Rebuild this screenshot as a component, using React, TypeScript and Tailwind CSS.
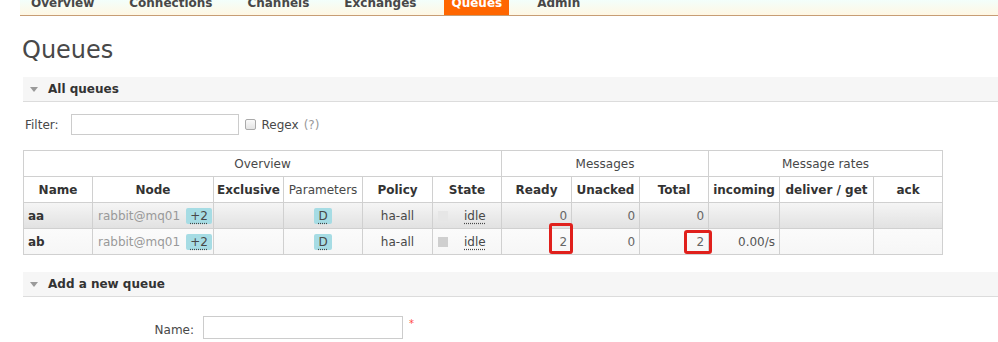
const NAV = ["Overview", "Connections", "Channels", "Exchanges", "Queues", "Admin"];

const COLS = [69, 121, 70, 79, 70, 69, 70, 68, 69, 71, 94, 69];

const HEADERS = [
  { label: "Name", bold: true },
  { label: "Node", bold: true },
  { label: "Exclusive", bold: true },
  { label: "Parameters", bold: false },
  { label: "Policy", bold: true },
  { label: "State", bold: true },
  { label: "Ready", bold: true },
  { label: "Unacked", bold: true },
  { label: "Total", bold: true },
  { label: "incoming", bold: true },
  { label: "deliver / get", bold: true },
  { label: "ack", bold: true },
];

const ROWS = [
  { name: "aa", ready: "0", unacked: "0", total: "0", incoming: "", alt: true },
  { name: "ab", ready: "2", unacked: "0", total: "2", incoming: "0.00/s", alt: false },
];

function SectionHeader({ title }: { title: string }) {
  return (
    <div className="flex h-[25px] items-center border-b border-[#dcdcdc] bg-[#f6f6f6] pl-[7px]">
      <span className="h-0 w-0 border-x-[4px] border-t-[5px] border-x-transparent border-t-[#9a9a9a]" />
      <h2 className="ml-[10px] text-[12px] font-bold text-[#333]">{title}</h2>
    </div>
  );
}

function Badge({ children }: { children: string }) {
  return (
    <span className="inline-block rounded-[2px] bg-[#a6dce4] px-[4px] leading-[16px] text-[#484848] underline decoration-dotted underline-offset-[3px]">
      {children}
    </span>
  );
}

export default function App() {
  return (
    <div className="h-[342px] w-[998px] overflow-hidden bg-white font-['DejaVu_Sans',sans-serif] text-[12px] text-[#484848]">
      <nav className="ml-[20px] h-[16px] overflow-hidden border-b border-[#c79d74] bg-linear-to-b from-[#f3fffb] to-[#fff7e4]">
        <ul className="flex gap-[21px] pl-[4px]">
          {NAV.map((item) => (
            <li
              key={item}
              className={
                item === "Queues"
                  ? "h-[15px] bg-[#ff6600] px-[7px] font-bold leading-[14px] text-white"
                  : "h-[15px] px-[7px] font-bold leading-[14px] text-[#484848]"
              }
            >
              <span className="-mt-[4px] block">{item}</span>
            </li>
          ))}
        </ul>
      </nav>

      <h1 className="ml-[22px] mt-[20px] text-[24px] font-normal leading-[28px] text-[#484848]">Queues</h1>

      <div className="ml-[23px] mt-[13px]">
        <SectionHeader title="All queues" />

        <div className="mt-[12px] flex h-[21px] items-center pl-[2px]">
          <span>Filter:</span>
          <input type="text" className="ml-[12px] h-[21px] w-[168px] border border-[#ccc] bg-white outline-none" />
          <span className="ml-[6px] h-[11px] w-[11px] rounded-[2px] border border-[#aaa] bg-linear-to-b from-[#fafafa] to-[#e4e4e4]" />
          <span className="ml-[6px]">Regex</span>
          <span className="ml-[5px] text-[#999]">(?)</span>
        </div>

        <table className="mt-[15px] w-[919px] table-fixed border-collapse">
          <colgroup>
            {COLS.map((w, i) => (
              <col key={i} style={{ width: w }} />
            ))}
          </colgroup>
          <thead>
            <tr className="h-[26px]">
              <th colSpan={6} className="border border-[#d0d0d0] font-normal">Overview</th>
              <th colSpan={3} className="border border-[#d0d0d0] font-normal">Messages</th>
              <th colSpan={3} className="border border-[#d0d0d0] font-normal">Message rates</th>
            </tr>
            <tr className="h-[26px]">
              {HEADERS.map((h) => (
                <th
                  key={h.label}
                  className={
                    h.bold
                      ? "border border-[#d0d0d0] font-bold whitespace-nowrap text-[#333]"
                      : "border border-[#d0d0d0] font-normal whitespace-nowrap"
                  }
                >
                  {h.label}
                </th>
              ))}
            </tr>
          </thead>
          <tbody>
            {ROWS.map((r) => (
              <tr
                key={r.name}
                className={
                  r.alt
                    ? "h-[26px] bg-linear-to-b from-[#f5f5f5] to-[#e1e1e1]"
                    : "h-[26px] bg-linear-to-b from-[#fbfbfb] to-[#f6f6f6]"
                }
              >
                <td className="border border-[#d0d0d0] pl-[4px] font-bold text-[#333]">{r.name}</td>
                <td className="border border-[#d0d0d0] pl-[5px] whitespace-nowrap">
                  <span className="text-[#999]">rabbit@mq01</span>
                  <span className="ml-[6px]">
                    <Badge>+2</Badge>
                  </span>
                </td>
                <td className="border border-[#d0d0d0]" />
                <td className="border border-[#d0d0d0] text-center">
                  <Badge>D</Badge>
                </td>
                <td className="border border-[#d0d0d0] text-center">ha-all</td>
                <td className="border border-[#d0d0d0] pl-[5px]">
                  <div className="flex items-center">
                    <span className={r.alt ? "h-[10px] w-[10px] bg-[#e6e6e6]" : "h-[10px] w-[10px] bg-[#cfcfcf]"} />
                    <span className="ml-[16px] underline decoration-dotted underline-offset-[3px]">idle</span>
                  </div>
                </td>
                <td className="relative border border-[#d0d0d0] pr-[4px] text-right text-[#666]">
                  {r.ready}
                  {!r.alt && (
                    <span className="absolute -right-[2px] -top-[6px] h-[31px] w-[24px] rounded-[3px] border-[3px] border-[#e0201c]" />
                  )}
                </td>
                <td className="border border-[#d0d0d0] pr-[4px] text-right text-[#666]">{r.unacked}</td>
                <td className="relative border border-[#d0d0d0] pr-[4px] text-right text-[#666]">
                  {r.total}
                  {!r.alt && (
                    <span className="absolute -right-[4px] top-[1px] h-[24px] w-[28px] rounded-[3px] border-[3px] border-[#e0201c]" />
                  )}
                </td>
                <td className="border border-[#d0d0d0] pr-[4px] text-right text-[#555]">{r.incoming}</td>
                <td className="border border-[#d0d0d0]" />
                <td className="border border-[#d0d0d0]" />
              </tr>
            ))}
          </tbody>
        </table>

        <div className="mt-[17px]">
          <SectionHeader title="Add a new queue" />
        </div>

        <div className="mt-[19px] flex items-start">
          <label className="w-[171px] pt-[5px] text-right">Name:</label>
          <input type="text" className="ml-[9px] h-[23px] w-[200px] border border-[#ccc] bg-white outline-none" />
          <span className="ml-[6px] mt-[3px] text-[10px] leading-none text-[#f44]">*</span>
        </div>
      </div>
    </div>
  );
}
